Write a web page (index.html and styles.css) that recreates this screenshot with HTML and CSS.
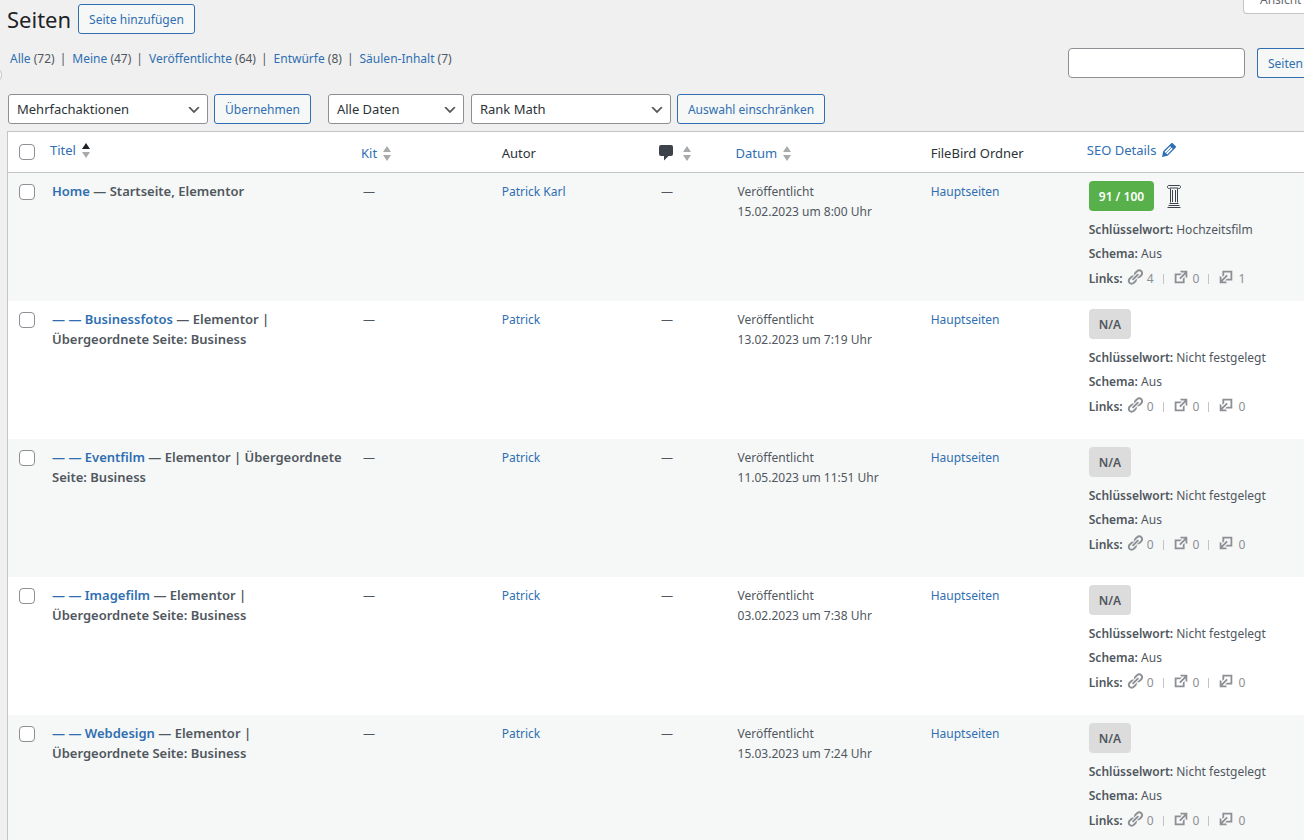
FILE: index.html
```html
<!DOCTYPE html>
<html lang="de">
<head>
    <meta charset="UTF-8">
    <meta name="viewport" content="width=device-width, initial-scale=1.0">
    <title>Seiten</title>
    <link rel="stylesheet" href="styles.css">
    <script src="pages.js" defer></script>
</head>
<body>
<svg class="sprite" aria-hidden="true">
    <symbol id="icon-link" viewBox="0 0 20 20">
        <path fill="currentColor" d="M17.740 2.760c1.680 1.690 1.680 4.410 0 6.100l-1.530 1.520c-1.120 1.120-2.700 1.470-4.140 1.090l2.620-2.610.76-.77.76-.76c.84-.84.84-2.200 0-3.040-.84-.85-2.200-.85-3.040 0l-.77.76-3.380 3.380c-.37-1.440-.02-3.020 1.100-4.140l1.520-1.530c1.690-1.680 4.420-1.680 6.100 0zM8.590 13.430l5.340-5.340c.42-.42.42-1.100 0-1.520-.44-.43-1.130-.39-1.530 0l-5.330 5.340c-.42.42-.42 1.100 0 1.520.44.43 1.130.39 1.520 0zm-.76 2.290l4.140-4.150c.38 1.440.03 3.020-1.090 4.140l-1.520 1.530c-1.690 1.680-4.410 1.680-6.100 0-1.680-1.680-1.680-4.420 0-6.100l1.530-1.520c1.120-1.120 2.700-1.470 4.140-1.100l-4.140 4.150c-.85.84-.85 2.200 0 3.050.84.84 2.200.84 3.040 0z"/>
    </symbol>
    <symbol id="icon-external" viewBox="0 0 20 20">
        <path fill="currentColor" d="M9 3h8v8l-2-1V6.920l-5.600 5.590-1.410-1.410L14.080 5H10zm3 12v-3l2-2v7H3V6h8L9 8H5v7h7z"/>
    </symbol>
    <symbol id="icon-incoming" viewBox="0 0 20 20">
        <path fill="currentColor" transform="rotate(180 10 10)" d="M9 3h8v8l-2-1V6.920l-5.600 5.590-1.410-1.410L14.080 5H10zm3 12v-3l2-2v7H3V6h8L9 8H5v7h7z"/>
    </symbol>
</svg>

<header class="top">
    <h1>Seiten</h1>
    <a href="#" class="button">Seite hinzufügen</a>
    <button type="button" class="screen-options">Ansicht</button>
</header>
<span class="collapse"></span>

<div class="filters">
    <ul class="views">
        <li><a href="#">Alle</a> (72)</li>
        <li><a href="#">Meine</a> (47)</li>
        <li><a href="#">Veröffentlichte</a> (64)</li>
        <li><a href="#">Entwürfe</a> (8)</li>
        <li><a href="#">Säulen-Inhalt</a> (7)</li>
    </ul>
    <form class="search">
        <input type="search" aria-label="Seiten durchsuchen">
        <button type="button" class="button search-button">Seiten</button>
    </form>
</div>

<div class="tablenav">
    <select class="wide" aria-label="Mehrfachaktion wählen">
        <option>Mehrfachaktionen</option>
    </select>
    <button type="button" class="button apply">Übernehmen</button>
    <select class="dates" aria-label="Nach Datum filtern">
        <option>Alle Daten</option>
    </select>
    <select class="wide" aria-label="Nach SEO filtern">
        <option>Rank Math</option>
    </select>
    <button type="button" class="button">Auswahl einschränken</button>
</div>

<table class="pages">
    <colgroup>
        <col class="col-check">
        <col class="col-title">
        <col class="col-kit">
        <col class="col-author">
        <col class="col-comments">
        <col class="col-date">
        <col class="col-folder">
        <col class="col-seo">
    </colgroup>
    <thead>
    <tr>
        <td class="check"><input type="checkbox" aria-label="Alle auswählen"></td>
        <th class="raised"><a href="#">Titel<span class="sort asc"></span></a></th>
        <th><a href="#">Kit<span class="sort"></span></a></th>
        <th class="plain">Autor</th>
        <th>
            <a href="#" aria-label="Kommentare">
                <svg class="bubble" viewBox="0 0 14 16"><path d="M2 0h10a2 2 0 0 1 2 2v7a2 2 0 0 1-2 2H9.500L5 15.500V11H2a2 2 0 0 1-2-2V2a2 2 0 0 1 2-2z"/></svg><span class="sort"></span>
            </a>
        </th>
        <th><a href="#">Datum<span class="sort"></span></a></th>
        <th class="plain">FileBird Ordner</th>
        <th class="raised">
            <a href="#">SEO Details
                <svg class="pencil" viewBox="3 3 14 14"><path fill="currentColor" d="M13.890 3.390l2.710 2.720c.46.46.42 1.240.03 1.640l-8.010 8.020-5.560 1.160 1.160-5.580s7.600-7.630 7.990-8.030c.39-.39 1.220-.39 1.680.07zm-2.730 2.790l-5.590 5.610 1.110 1.110 5.540-5.650zm-2.970 8.230l5.580-5.600-1.070-1.080-5.590 5.600z"/></svg>
            </a>
        </th>
    </tr>
    </thead>
    <tbody id="rows"></tbody>
</table>
</body>
</html>
```
FILE: styles.css
```css
* {
    box-sizing: border-box;
}

body {
    margin: 0;
    padding-left: 7px;
    height: 100vh;
    overflow: hidden;
    background-color: #f0f0f0;
    color: #50575e;
    font-family: "Segoe UI", "Noto Sans", sans-serif;
    font-size: 12px;
    line-height: 20px;
}

a {
    color: #2f6fb1;
    text-decoration: none;
}

.sprite {
    display: none;
}

.top {
    display: flex;
    align-items: center;
    gap: 7px;
    height: 38px;
}

h1 {
    margin: 0;
    color: #1d2327;
    font-size: 22px;
    font-weight: 400;
    line-height: 30px;
}

.button {
    height: 30px;
    padding: 1px 10px 0;
    border: 1px solid #2f6fb1;
    border-radius: 3px;
    background-color: #f6f7f7;
    color: #2f6fb1;
    font-family: inherit;
    font-size: 12px;
    line-height: 28px;
    white-space: nowrap;
}

.screen-options {
    align-self: flex-start;
    width: 61px;
    height: 28px;
    margin: -14px 0 0 auto;
    padding: 0 0 2px 16px;
    border: 1px solid #c3c4c7;
    border-right: none;
    border-radius: 0 0 0 4px;
    background-color: #fff;
    color: #646970;
    font-family: inherit;
    font-size: 12px;
    text-align: left;
}

.collapse {
    position: absolute;
    top: 66px;
    left: -16px;
    width: 18px;
    height: 18px;
    border: 1px solid #c3c4c7;
    border-radius: 50%;
    background-color: #fff;
}

.filters {
    display: flex;
    justify-content: space-between;
    padding-top: 10px;
}

.views {
    display: flex;
    margin: 0;
    padding: 1px 0 0 3px;
    list-style: none;
}

.views li + li::before {
    content: "|";
    margin: 0 6px 0 5px;
}

.search {
    display: flex;
    gap: 12px;
}

.search input {
    width: 177px;
    height: 30px;
    border: 1px solid #8c8f94;
    border-radius: 4px;
    background-color: #fff;
}

.search-button {
    width: 47px;
    padding-right: 0;
    border-right: none;
    border-radius: 3px 0 0 3px;
    text-align: left;
}

.tablenav {
    display: flex;
    gap: 6px;
    padding: 16px 0 7px 1px;
}

select {
    height: 30px;
    padding: 0 24px 0 8px;
    border: 1px solid #8c8f94;
    border-radius: 3px;
    appearance: none;
    background: #fff url("data:image/svg+xml,%3Csvg xmlns='http://www.w3.org/2000/svg' viewBox='0 0 20 20'%3E%3Cpath d='m5 6 5 5 5-5 2 1-7 7-7-7z' fill='%23555'/%3E%3C/svg%3E") no-repeat right 5px top 55%;
    background-size: 16px 16px;
    color: #2c3338;
    font-family: inherit;
    font-size: 13px;
}

.wide {
    width: 200px;
}

.dates {
    width: 136px;
    margin-right: 1px;
}

.apply {
    margin-right: 11px;
}

.pages {
    width: 100%;
    border: 1px solid #c3c4c7;
    border-right: none;
    border-spacing: 0;
    table-layout: fixed;
    background-color: #fff;
}

.col-check {
    width: 34px;
}

.col-title {
    width: 24%;
}

.col-kit {
    width: 10.7%;
}

.col-author {
    width: 12.3%;
}

.col-comments {
    width: 5.9%;
}

.col-date {
    width: 14.9%;
}

.col-folder {
    width: 12.2%;
}

thead th,
thead td {
    height: 41px;
    padding: 2px 8px 0;
    border-bottom: 1px solid #c3c4c7;
    color: #2c3338;
    font-size: 13px;
    font-weight: 400;
    text-align: left;
    vertical-align: middle;
}

thead th a {
    display: flex;
    align-items: center;
    gap: 6px;
}

thead .plain {
    padding-left: 10px;
}

thead .raised {
    padding: 0 8px 4px;
}

tbody td {
    height: 138px;
    padding: 9px 10px 0;
    vertical-align: top;
}

tbody .front td {
    height: 128px;
}

tbody tr:nth-child(odd) {
    background-color: #f6f7f7;
}

.pages .check {
    padding: 0 0 0 11px;
}

tbody input {
    margin-top: 11px;
}

input[type="checkbox"] {
    display: block;
    width: 16px;
    height: 16px;
    margin-right: 0;
    margin-left: 0;
    border: 1px solid #8c8f94;
    border-radius: 4px;
    appearance: none;
    background-color: #fff;
}

.sort {
    display: grid;
    gap: 3px;
}

.sort::before,
.sort::after {
    content: "";
    border: 4px solid transparent;
    border-top-width: 0;
    border-bottom: 6px solid #a7aaad;
}

.sort::after {
    border-top: 6px solid #a7aaad;
    border-bottom-width: 0;
}

.asc::before {
    border-bottom-color: #1d2327;
}

.bubble {
    width: 14px;
    height: 16px;
    margin-right: 4px;
    fill: #3c434a;
}

.pencil {
    width: 14px;
    height: 14px;
}

.pages .title {
    padding-top: 8px;
    font-size: 13px;
    font-weight: 600;
}

.pages .seo {
    padding-top: 8px;
    padding-right: 0;
    white-space: nowrap;
}

.score-line {
    display: flex;
    align-items: center;
    gap: 13px;
    margin-bottom: 7px;
}

.score {
    height: 30px;
    padding: 1px 10px 0;
    border-radius: 4px;
    background-color: #dcdcdc;
    font-weight: 600;
    line-height: 30px;
}

.score.good {
    background-color: #58b04b;
    color: #fff;
}

.pillar {
    width: 14px;
    height: 24px;
}

.detail {
    line-height: 24px;
}

.detail b {
    font-weight: 600;
}

.links {
    display: flex;
    align-items: center;
    line-height: 25px;
}

.links span {
    display: flex;
    align-items: center;
    gap: 3px;
    margin-left: 3px;
    color: #8c8f94;
}

.links span + span {
    margin-left: 9px;
}

.links span + span::before {
    content: "";
    height: 10px;
    margin-right: 5px;
    border-left: 1px solid #c3c4c7;
}

.links svg {
    width: 18px;
    height: 18px;
    margin-bottom: 3px;
}
```
FILE: pages.js
```js
const pages = [
    {title: "Home", state: "Startseite, Elementor", author: "Patrick Karl", date: "15.02.2023 um 8:00 Uhr", score: "91 / 100", keyword: "Hochzeitsfilm", links: [4, 0, 1], front: true},
    {title: "— — Businessfotos", state: "Elementor | Übergeordnete Seite: Business", author: "Patrick", date: "13.02.2023 um 7:19 Uhr"},
    {title: "— — Eventfilm", state: "Elementor | Übergeordnete Seite: Business", author: "Patrick", date: "11.05.2023 um 11:51 Uhr"},
    {title: "— — Imagefilm", state: "Elementor | Übergeordnete Seite: Business", author: "Patrick", date: "03.02.2023 um 7:38 Uhr"},
    {title: "— — Webdesign", state: "Elementor | Übergeordnete Seite: Business", author: "Patrick", date: "15.03.2023 um 7:24 Uhr"},
];

const pillar = `<svg class="pillar" viewBox="0 0 14 24" fill="none" stroke="#3c434a">
    <path d="M2 1.500h10M2 1.500a1.500 1.500 0 1 0 1 2.500h8a1.500 1.500 0 1 0 1-2.500M3.500 4.500v14M5.500 6v12M8.500 6v12M10.500 4.500v14M2.500 19.500h9M1.500 21.500h11M.5 23.500h13"/>
</svg>`;

function rowHtml(page) {
    const links = page.links || [0, 0, 0];
    return `<tr class="${page.front ? "front" : ""}">
        <td class="check"><input type="checkbox" aria-label="${page.title} auswählen"></td>
        <td class="title"><a href="#">${page.title}</a> — ${page.state}</td>
        <td>—</td>
        <td><a href="#">${page.author}</a></td>
        <td>—</td>
        <td>Veröffentlicht<br>${page.date}</td>
        <td><a href="#">Hauptseiten</a></td>
        <td class="seo">
            <div class="score-line"><span class="score ${page.front ? "good" : ""}">${page.score || "N/A"}</span>${page.front ? pillar : ""}</div>
            <div class="detail"><b>Schlüsselwort:</b> ${page.keyword || "Nicht festgelegt"}</div>
            <div class="detail"><b>Schema:</b> Aus</div>
            <div class="detail links"><b>Links:</b>
                <span><svg><use href="#icon-link"/></svg>${links[0]}</span>
                <span><svg><use href="#icon-external"/></svg>${links[1]}</span>
                <span><svg><use href="#icon-incoming"/></svg>${links[2]}</span>
            </div>
        </td>
    </tr>`;
}

document.getElementById("rows").innerHTML = pages.map(rowHtml).join("");
```
